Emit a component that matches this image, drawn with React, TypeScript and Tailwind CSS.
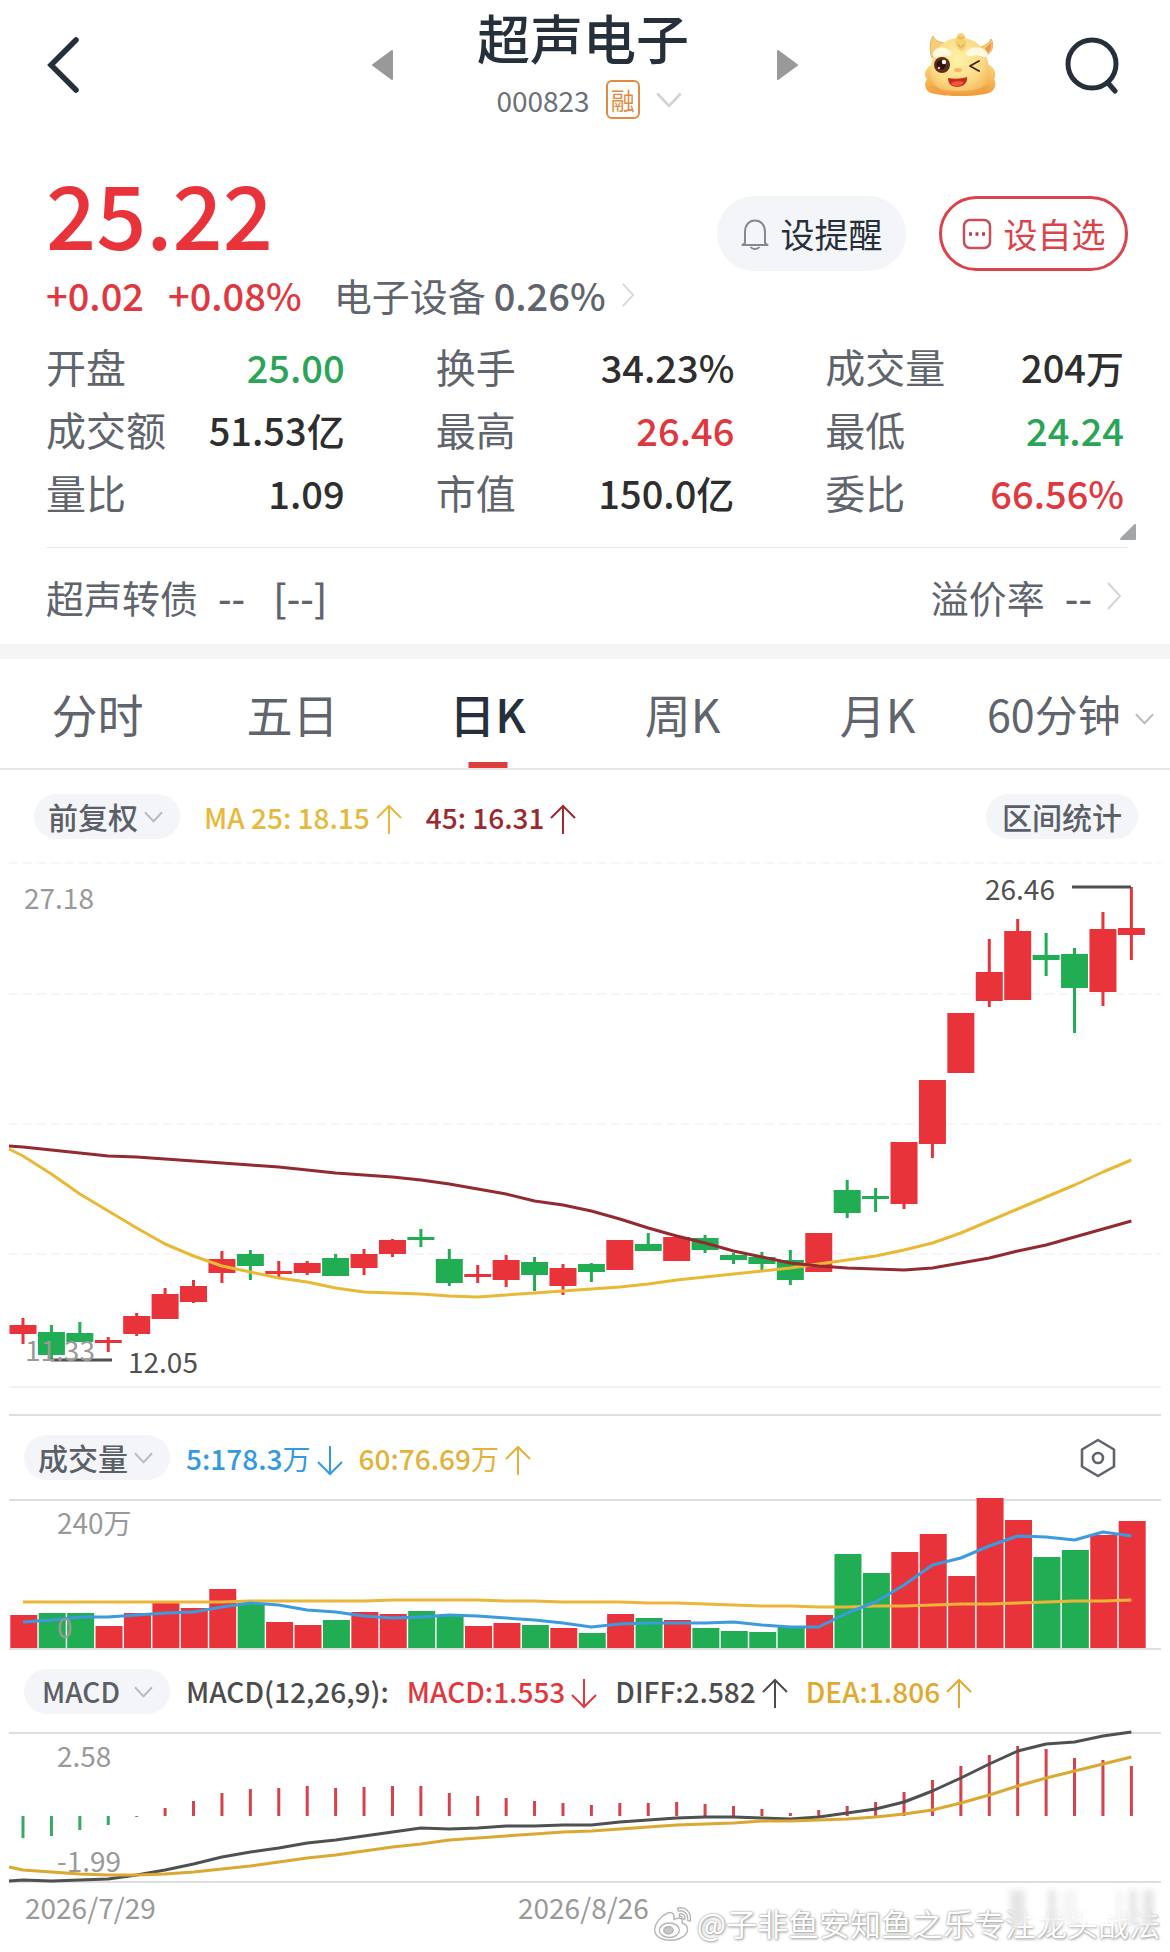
import React from 'react';

const RED = '#e9333b';
const GREEN = '#21ad53';
const STEP = 28.42;
const cx = (i: number) => 23 + i * STEP;

type Candle = [up: 0 | 1, top: number, bottom: number, high: number, low: number];

const candles: Candle[] = [
  [1, 1325, 1334, 1318, 1344], [0, 1332, 1355, 1325, 1360], [0, 1333, 1342, 1322, 1342], [1, 1340, 1343, 1337, 1352],
  [1, 1316, 1334, 1313, 1336], [1, 1294, 1319, 1288, 1319], [1, 1286, 1302, 1280, 1303], [1, 1259, 1273, 1251, 1283],
  [0, 1254, 1266, 1250, 1280], [1, 1271, 1274, 1261, 1278], [1, 1263, 1273, 1261, 1275], [0, 1258, 1276, 1254, 1276],
  [1, 1254, 1268, 1249, 1275], [1, 1240, 1254, 1239, 1257], [0, 1237, 1240, 1229, 1247], [0, 1259, 1283, 1249, 1286],
  [1, 1274, 1277, 1265, 1283], [1, 1260, 1280, 1255, 1287], [0, 1262, 1275, 1257, 1291], [1, 1268, 1286, 1264, 1295],
  [0, 1264, 1272, 1263, 1282], [1, 1240, 1270, 1240, 1270], [0, 1244, 1251, 1233, 1251], [1, 1237, 1261, 1237, 1261],
  [0, 1238, 1250, 1235, 1253], [0, 1255, 1260, 1253, 1264], [0, 1257, 1264, 1252, 1270], [0, 1260, 1280, 1250, 1285],
  [1, 1233, 1272, 1233, 1272], [0, 1190, 1213, 1180, 1218], [0, 1196, 1199, 1188, 1212], [1, 1142, 1204, 1142, 1209],
  [1, 1080, 1144, 1080, 1158], [1, 1013, 1073, 1013, 1073], [1, 972, 1001, 939, 1007], [1, 931, 1000, 919, 1000],
  [0, 955, 960, 933, 976], [0, 954, 988, 948, 1033], [1, 929, 992, 912, 1006], [1, 928, 935, 887, 960],
];

const ma25 = [
  1156, 1174, 1194, 1211, 1228, 1244, 1256, 1266, 1272, 1278, 1282, 1288, 1292, 1293, 1294, 1296, 1297, 1295, 1293, 1291,
  1289, 1287, 1284, 1280, 1277, 1274, 1271, 1268, 1264, 1260, 1256, 1250, 1243, 1233, 1221, 1209, 1197, 1185, 1172, 1160,
];
const ma45 = [
  1147, 1150, 1153, 1156, 1157, 1159, 1161, 1163, 1165, 1167, 1170, 1173, 1175, 1177, 1180, 1184, 1189, 1194, 1201, 1205,
  1211, 1219, 1228, 1236, 1243, 1251, 1257, 1263, 1266, 1268, 1269, 1270, 1268, 1263, 1258, 1251, 1245, 1237, 1229, 1221,
];

const volumeTops = [
  1615, 1613, 1613, 1626, 1613, 1603, 1608, 1589, 1603, 1622, 1625, 1620, 1612, 1614, 1611, 1616, 1626, 1623, 1625, 1628,
  1633, 1614, 1618, 1620, 1628, 1631, 1632, 1627, 1615, 1554, 1573, 1552, 1534, 1576, 1498, 1520, 1557, 1550, 1535, 1521,
];
const volume5 = [
  1622, 1620, 1617, 1617, 1615, 1613, 1612, 1607, 1603, 1605, 1610, 1612, 1616, 1618, 1617, 1615, 1616, 1618, 1620, 1623,
  1627, 1624, 1623, 1623, 1623, 1622, 1625, 1627, 1627, 1613, 1602, 1585, 1565, 1558, 1546, 1536, 1537, 1540, 1532, 1536,
];
const volume60 = [
  1602, 1602, 1602, 1602, 1602, 1602, 1602, 1602, 1601, 1601, 1601, 1601, 1601, 1600, 1600, 1600, 1600, 1601, 1601, 1602,
  1602, 1602, 1603, 1603, 1604, 1605, 1606, 1606, 1607, 1607, 1606, 1606, 1605, 1604, 1604, 1603, 1602, 1601, 1601, 1600,
];

const macdEnds = [
  1838, 1836, 1830, 1825, 1817, 1808, 1801, 1793, 1789, 1788, 1786, 1788, 1787, 1786, 1786, 1793, 1796, 1798, 1801, 1803,
  1805, 1803, 1803, 1802, 1804, 1806, 1809, 1813, 1810, 1806, 1802, 1792, 1780, 1766, 1755, 1746, 1749, 1758, 1760, 1766,
];
const diff = [
  1880, 1881, 1880, 1879, 1875, 1870, 1864, 1857, 1852, 1848, 1843, 1840, 1836, 1832, 1828, 1829, 1828, 1826, 1826, 1825,
  1825, 1822, 1820, 1818, 1817, 1817, 1818, 1819, 1817, 1813, 1809, 1802, 1791, 1778, 1764, 1751, 1744, 1742, 1736, 1732,
];
const dea = [
  1870, 1872, 1874, 1875, 1875, 1874, 1872, 1869, 1866, 1862, 1858, 1855, 1851, 1847, 1844, 1840, 1838, 1836, 1834, 1832,
  1831, 1829, 1827, 1825, 1824, 1823, 1821, 1821, 1820, 1819, 1817, 1814, 1810, 1803, 1795, 1786, 1778, 1771, 1764, 1757,
];

function Line({ data, color, start }: { data: number[]; color: string; start?: number }) {
  const pts = data.map((y, i) => `${cx(i)},${y}`);
  if (start !== undefined) pts.unshift(`9,${start}`);
  return <polyline points={pts.join(' ')} fill="none" stroke={color} strokeWidth="3" strokeLinejoin="round" />;
}

function Chevron({ className, dir = 'down' }: { className: string; dir?: 'down' | 'right' }) {
  return dir === 'down' ? (
    <svg viewBox="0 0 20 12" className={className} fill="none" stroke="currentColor" strokeWidth="2" aria-hidden="true">
      <path d="M1 1l9 9.500 9-9.500" />
    </svg>
  ) : (
    <svg viewBox="0 0 14 28" className={className} fill="none" stroke="currentColor" strokeWidth="2" aria-hidden="true">
      <path d="M1 1l12 13L1 27" />
    </svg>
  );
}

function Arrow({ down }: { down?: boolean }) {
  return (
    <svg viewBox="0 0 26 32" className="mt-1 ml-[6px] h-8 w-[26px]" fill="none" stroke="currentColor" strokeWidth="2" aria-hidden="true">
      <path d={down ? 'M13 2v28M1 18l12 12 12-12' : 'M13 31V3M1 15L13 3l12 12'} />
    </svg>
  );
}

function PillSelect({ label, value, wide }: { label: string; value: string; wide?: boolean }) {
  return (
    <div className="relative h-[45px] w-[146px] shrink-0">
      <select
        aria-label={label}
        defaultValue={value}
        className={`h-full w-full appearance-none rounded-full bg-[#f4f5f8] text-[#5a5f68] font-medium ${wide ? 'pl-[18px] text-[28px]' : 'pl-[14px] text-[30px]'}`}
      >
        <option>{value}</option>
      </select>
      <Chevron className="pointer-events-none absolute top-[17px] right-[17px] h-3 w-[19px] text-[#b9bbc0]" />
    </div>
  );
}

function Mascot() {
  return (
    <svg viewBox="0 0 72 66" className="h-[66px] w-[72px]" aria-hidden="true">
      <defs>
        <radialGradient id="skin" cx="45%" cy="40%" r="65%">
          <stop offset="0" stopColor="#fff2a8" />
          <stop offset="0.65" stopColor="#fbdc86" />
          <stop offset="1" stopColor="#f4b75c" />
        </radialGradient>
        <linearGradient id="collar" x1="0" x2="0" y1="0" y2="1">
          <stop offset="0" stopColor="#fbd67c" />
          <stop offset="1" stopColor="#ef9a35" />
        </linearGradient>
      </defs>
      <path d="M5 34C0 40 0 44 3 47c-3 5-2 8 0 11 2 8 64 8 66 0 3-4 3-7 1-11 3-4 1-10-4-14z" fill="url(#collar)" />
      <path d="M8 26C5 18 6 9 9 4c2 4 5 6 11 7zM60 25c8-4 11-11 7-18-2 4-5 6-10 8z" fill="#f7ce78" stroke="#e9b05c" strokeWidth="1" />
      <path d="M63 22c4-3 5-8 4-12-2 3-4 5-6 6z" fill="#e79a50" />
      <path d="M36 6C18 6 10 19 7 33c-3 16 3 28 30 28 24 0 31-13 28-27C62 18 54 6 36 6z" fill="url(#skin)" />
      <path d="M32 8c0-3 2-7 5-7s5 4 4 7c4 3 0 10-3 11-4-1-8-6-6-11z" fill="#f5d074" />
      <path d="M34 12c1 3 4 5 6 0M34 5c2 2 4 2 6 0" fill="none" stroke="#e3ad4c" strokeWidth="1.200" />
      <path d="M9 21c2-6 11-8 17-2 3 3 1 6-3 5-5-2-8 2-12 1-2 0-3-2-2-4zM43 19c6-6 16-4 20 1 2 3 0 5-3 5-4-1-7-3-12-1-5 1-8-2-5-5z" fill="#fff9e2" />
      <ellipse cx="18" cy="33" rx="8" ry="8" fill="#5a2f1d" />
      <circle cx="17" cy="33" r="4.500" fill="#2d130d" />
      <circle cx="20" cy="30" r="2.200" fill="#fff" />
      <circle cx="15" cy="36" r="1.200" fill="#eec39b" />
      <path d="M55 29l-9 5 9 5" fill="none" stroke="#4a2618" strokeWidth="2" strokeLinecap="round" strokeLinejoin="round" />
      <ellipse cx="34" cy="38" rx="4" ry="2" fill="#f2b96c" />
      <path d="M24 46c6 1 13 1 19-1 1 6-4 10-10 10-5 0-9-3-9-9z" fill="#c92a1e" />
      <path d="M27 51c3-2 10-2 13-1-2 3-4 4-7 4-3 1-5-1-6-3z" fill="#f0563f" />
      <path d="M5 53c14 8 48 8 61-1-6 10-16 12-29 12S11 61 5 53z" fill="#f0a040" opacity=".7" />
    </svg>
  );
}

const stats: { name: string; value: string; tone: string }[] = [
  { name: '开盘', value: '25.00', tone: 'text-[#2aa457]' },
  { name: '换手', value: '34.23%', tone: 'text-[#2e2e2e]' },
  { name: '成交量', value: '204万', tone: 'text-[#2e2e2e]' },
  { name: '成交额', value: '51.53亿', tone: 'text-[#2e2e2e]' },
  { name: '最高', value: '26.46', tone: 'text-[#e0383f]' },
  { name: '最低', value: '24.24', tone: 'text-[#2aa457]' },
  { name: '量比', value: '1.09', tone: 'text-[#2e2e2e]' },
  { name: '市值', value: '150.0亿', tone: 'text-[#2e2e2e]' },
  { name: '委比', value: '66.56%', tone: 'text-[#e0383f]' },
];

const tabs = ['分时', '五日', '日K', '周K', '月K'];

function Header() {
  return (
    <header className="grid grid-cols-[1fr_auto_1fr] items-center gap-x-[84px] pt-[7px] pr-[50px] pb-[49px] pl-[46px]">
      <div className="flex items-center justify-between pt-1">
        <button aria-label="返回">
          <svg viewBox="0 0 34 58" className="h-[58px] w-[34px]" fill="none" stroke="#26303b" strokeWidth="5.500" strokeLinecap="round">
            <path d="M30 4L5 29l25 25" />
          </svg>
        </button>
        <button aria-label="上一只">
          <svg viewBox="0 0 22 32" className="h-8 w-[22px]" fill="#999" stroke="#999" strokeWidth="2" strokeLinejoin="round">
            <path d="M21 2v28L2 16z" />
          </svg>
        </button>
      </div>
      <div className="flex flex-col items-center">
        <h1 className="text-[53px] leading-[60px] font-medium text-[#26303b]">超声电子</h1>
        <div className="mt-[13px] flex h-[39px] items-center pl-3">
          <span className="text-[28px] text-[#6b7077]">000823</span>
          <span className="ml-4 flex h-[39px] w-[34px] items-center justify-center rounded-md border-2 border-[#e08a43] text-[24px] leading-none text-[#e08a43]">融</span>
          <button aria-label="展开" className="ml-4">
            <Chevron className="h-4 w-[26px] text-[#d0d2d5]" />
          </button>
        </div>
      </div>
      <div className="flex items-center justify-between pt-1 pl-1">
        <button aria-label="下一只">
          <svg viewBox="0 0 22 32" className="h-8 w-[22px]" fill="#999" stroke="#999" strokeWidth="2" strokeLinejoin="round">
            <path d="M1 2v28l19-14z" />
          </svg>
        </button>
        <div className="flex items-center gap-[68px]">
          <button aria-label="助手">
            <Mascot />
          </button>
          <button aria-label="搜索">
            <svg viewBox="0 0 56 58" className="h-[58px] w-14" fill="none" stroke="#26303b" strokeWidth="5" strokeLinecap="round">
              <circle cx="28" cy="28" r="24" />
              <path d="M44 47l7 8" />
            </svg>
          </button>
        </div>
      </div>
    </header>
  );
}

function Quote() {
  return (
    <section className="pr-[42px] pl-[46px]">
      <div className="flex justify-between">
        <p className="text-[88px] leading-[88px] font-medium text-[#e9333b]">25.22</p>
        <div className="mt-7 flex h-[75px] gap-[33px]">
          <button className="flex w-[189px] items-center justify-center gap-3 rounded-full bg-[#f4f5f8] text-[34px] text-[#26303b]">
            <svg viewBox="0 0 28 32" className="h-8 w-7" fill="none" stroke="#85888d" strokeWidth="2" strokeLinejoin="round" aria-hidden="true">
              <path d="M4 25V14C4 7 8 2.500 14 2.500S24 7 24 14v11l2.500 2H1.500zM9.500 29c2 2.500 7 2.500 9 0" />
            </svg>
            设提醒
          </button>
          <button className="flex w-[189px] items-center justify-center gap-3 rounded-full border-3 border-[#db434b] text-[34px] text-[#db434b]">
            <svg viewBox="0 0 30 32" className="h-8 w-[30px]" fill="none" stroke="#c4505a" strokeWidth="2.500" aria-hidden="true">
              <rect x="2" y="2" width="26" height="28" rx="6" />
              <path d="M7 16h3M13.500 16h3M20 16h3" stroke="#b9404a" strokeWidth="3.500" />
            </svg>
            设自选
          </button>
        </div>
      </div>

      <div className="flex items-center text-[38px] leading-[48px] font-medium text-[#e0383f]">
        <span>+0.02</span>
        <span className="ml-6">+0.08%</span>
        <a href="#sector" className="ml-8 flex items-center text-[#5f646d]">
          <span className="font-normal">电子设备</span>
          <span className="ml-2">0.26%</span>
          <Chevron dir="right" className="ml-4 h-6 w-3 text-[#d3d5d8]" />
        </a>
      </div>

      <dl className="mt-4 grid grid-cols-3 gap-x-[91px] pr-1 leading-[63px]">
        {stats.map((s) => (
          <div key={s.name} className="flex justify-between">
            <dt className="text-[40px] text-[#5f646d]">{s.name}</dt>
            <dd className={`text-[38px] font-medium ${s.tone}`}>{s.value}</dd>
          </div>
        ))}
      </dl>
      <div className="-mr-[9px] flex h-[23px] justify-end">
        <svg viewBox="0 0 17 17" className="size-[17px]" fill="#a3a6a9" stroke="#a3a6a9" strokeWidth="2" strokeLinejoin="round" aria-hidden="true">
          <path d="M15 1v14H1z" />
        </svg>
      </div>

      <div className="flex h-[97px] items-center justify-between border-t border-[#ebebee] text-[38px] text-[#5f646d]">
        <p className="flex gap-[20px]">
          <span>超声转债</span>
          <span className="font-medium">--</span>
          <span className="ml-2 font-medium">[--]</span>
        </p>
        <a href="#premium" className="flex items-center pr-[6px]">
          <span>溢价率</span>
          <span className="ml-[20px] font-medium">--</span>
          <Chevron dir="right" className="ml-[14px] h-7 w-4 text-[#d3d5d8]" />
        </a>
      </div>
    </section>
  );
}

function PeriodTabs() {
  return (
    <nav className="grid h-[111px] grid-cols-6 border-b-2 border-[#e6e7e9] text-[46px] text-[#5f646d]">
      {tabs.map((t) => (
        <button key={t} className={`relative ${t === '日K' ? 'font-medium text-[#26303b]' : ''}`}>
          {t}
          {t === '日K' && <span className="absolute bottom-0 left-1/2 h-[6px] w-[39px] -translate-x-1/2 bg-[#df3c3c]" />}
        </button>
      ))}
      <div className="relative">
        <select aria-label="分钟周期" defaultValue="60分钟" className="h-full w-full appearance-none bg-transparent pl-3 text-[43px]">
          <option>60分钟</option>
        </select>
        <Chevron className="pointer-events-none absolute top-[54px] right-4 h-3 w-[19px] text-[#b9bbc0]" />
      </div>
    </nav>
  );
}

function PriceChart() {
  return (
    <section>
      <div className="flex h-[81px] items-center pt-3 pr-8 pl-[34px] text-[28px] font-medium">
        <PillSelect label="复权方式" value="前复权" />
        <span className="ml-6 flex items-center text-[#e6b93c]">
          MA 25: 18.15
          <Arrow />
        </span>
        <span className="ml-6 flex items-center text-[#9b2a30]">
          45: 16.31
          <Arrow />
        </span>
        <button className="ml-auto h-[45px] rounded-full bg-[#f4f5f8] px-4 text-[30px] text-[#5a5f68]">区间统计</button>
      </div>
      <svg viewBox="0 851 1170 563" className="block w-full" role="img" aria-label="日K线">
        {[863, 994, 1124, 1254].map((y) => (
          <path key={y} d={`M9 ${y}H1161`} stroke="#f3f3f3" strokeWidth="1.500" strokeDasharray="9 5" />
        ))}
        <path d="M9 1387H1161" stroke="#ededed" strokeWidth="1.500" />
        {candles.map(([up, top, bottom, high, low], i) => (
          <g key={i} fill={up ? RED : GREEN}>
            <rect x={cx(i) - 13.5} y={top} width="27" height={bottom - top} />
            <rect x={cx(i) - 1.5} y={high} width="3" height={low - high} />
          </g>
        ))}
        <Line data={ma25} color="#e9b935" start={1149} />
        <Line data={ma45} color="#932a30" start={1146} />
        <path d="M51 1360H112M1072 887H1131" stroke="#505050" strokeWidth="3" />
        <g fontSize="28" fill="#999">
          <text x="24" y="909">27.18</text>
          <text x="25" y="1361">11.33</text>
          <g fill="#505050">
            <text x="128" y="1373">12.05</text>
            <text x="985" y="900">26.46</text>
          </g>
        </g>
      </svg>
    </section>
  );
}

function VolumeChart() {
  return (
    <section>
      <div className="mx-[9px] flex h-[87px] items-center border-y-2 border-[#dedede] pr-[45px] pl-[15px] text-[28px]">
        <PillSelect label="指标一" value="成交量" />
        <span className="ml-4 flex items-center text-[#3499e0]">
          <span className="font-medium">5:178.3</span>万
          <Arrow down />
        </span>
        <span className="ml-4 flex items-center text-[#e3b23b]">
          <span className="font-medium">60:76.69</span>万
          <Arrow />
        </span>
        <button aria-label="指标设置" className="ml-auto">
          <svg viewBox="0 0 36 40" className="h-10 w-9" fill="none" stroke="#5f646d" strokeWidth="2.600" strokeLinejoin="round">
            <path d="M18 2l16 9.500v17L18 38 2 28.500v-17z" />
            <circle cx="18" cy="20" r="5" />
          </svg>
        </button>
      </div>
      <svg viewBox="0 1501 1170 149" className="block w-full overflow-visible" role="img" aria-label="成交量">
        <path d="M9 1649H1161" stroke="#dedede" strokeWidth="2" />
        {volumeTops.map((y, i) => (
          <rect key={i} x={cx(i) - 12.7} y={y} width="27" height={1648 - y} fill={candles[i][0] ? RED : GREEN} />
        ))}
        <Line data={volume60} color="#ebb539" />
        <Line data={volume5} color="#3c9bdc" />
        <g fontSize="28" fill="#999">
          <text x="57" y="1534">240万</text>
          <text x="57" y="1638">0</text>
        </g>
      </svg>
    </section>
  );
}

function MacdChart() {
  return (
    <section>
      <div className="mx-[9px] flex h-[84px] items-center border-b-2 border-[#dedede] pl-[15px] text-[28px] font-medium">
        <PillSelect label="指标二" value="MACD" wide />
        <span className="ml-4 text-[#4c4c4c]">MACD(12,26,9):</span>
        <span className="ml-[18px] flex items-center text-[#e0383f]">
          MACD:1.553
          <Arrow down />
        </span>
        <span className="ml-[18px] flex items-center text-[#4c4c4c]">
          DIFF:2.582
          <Arrow />
        </span>
        <span className="ml-[18px] flex items-center text-[#e0a92f]">
          DEA:1.806
          <Arrow />
        </span>
      </div>
      <svg viewBox="0 1734 1170 149" className="block w-full overflow-visible" role="img" aria-label="MACD">
        <path d="M9 1882H1161" stroke="#dedede" strokeWidth="2" />
        <g fontSize="28" fill="#999">
          <text x="57" y="1767">2.58</text>
          <text x="57" y="1872">-1.99</text>
        </g>
        {macdEnds.map((y, i) => (
          <rect
            key={i}
            x={cx(i) - 1.5}
            y={Math.min(y, 1816)}
            width="3"
            height={Math.max(Math.abs(y - 1816), 0.5)}
            fill={i < 5 ? '#3aa862' : '#d4424b'}
          />
        ))}
        <Line data={diff} color="#505050" start={1881} />
        <Line data={dea} color="#dba831" start={1867} />
      </svg>
      <div className="grid grid-cols-[493px_1fr] pt-[3px] pl-[25px] text-[28px] leading-[42px] text-[#999]">
        <time dateTime="2026-07-29">2026/7/29</time>
        <time dateTime="2026-08-26">2026/8/26</time>
      </div>
    </section>
  );
}

function Watermark() {
  return (
    <div className="pointer-events-none absolute right-[10px] bottom-2 flex items-center gap-1 text-[31px] leading-[42px] whitespace-nowrap text-white [text-shadow:0_0_2px_#8c8c8c,1px_1px_3px_#a0a0a0]">
      <svg viewBox="0 0 44 42" className="h-[42px] w-10" fill="#fff" stroke="#b5b5b5" strokeWidth="1.500" aria-hidden="true">
        <path d="M16 10C9 13 1 22 2 30c1 7 9 10 17 10 10 0 19-5 19-12 0-4-3-6-6-7 1-4-1-7-9-4 1-5-1-9-7-7z" />
        <ellipse cx="18" cy="29" rx="11" ry="8" />
        <path d="M12 30a5 4 0 1 0 10-2 5 4 0 1 0-10 2z" fill="#c6c6c6" />
        <path d="M27 5c8-3 16 4 14 14l-3-1c1-7-4-12-10-10zM29 11c4-1 7 2 6 6l-3-1c0-2-1-3-3-2z" />
      </svg>
      <span>@子非鱼安知鱼之乐专注龙头战法</span>
      <div className="absolute top-[-12px] right-[6px] flex h-9 w-[144px] gap-[6px] bg-white/70 blur-[3px]">
        <span className="w-4 bg-neutral-200" />
        <span className="w-3 bg-white" />
        <span className="w-2 bg-neutral-200" />
        <span className="w-4 bg-neutral-100" />
        <span className="w-7 bg-white" />
        <span className="w-2 bg-neutral-100" />
        <span className="w-2 bg-neutral-200" />
        <span className="w-3 bg-neutral-200" />
      </div>
    </div>
  );
}

export default function App() {
  return (
    <main className="relative min-h-screen overflow-hidden bg-white font-['Noto_Sans_CJK_SC',sans-serif]">
      <Header />
      <Quote />
      <div className="h-[15px] bg-[#f5f5f5]" />
      <PeriodTabs />
      <PriceChart />
      <VolumeChart />
      <MacdChart />
      <Watermark />
    </main>
  );
}
